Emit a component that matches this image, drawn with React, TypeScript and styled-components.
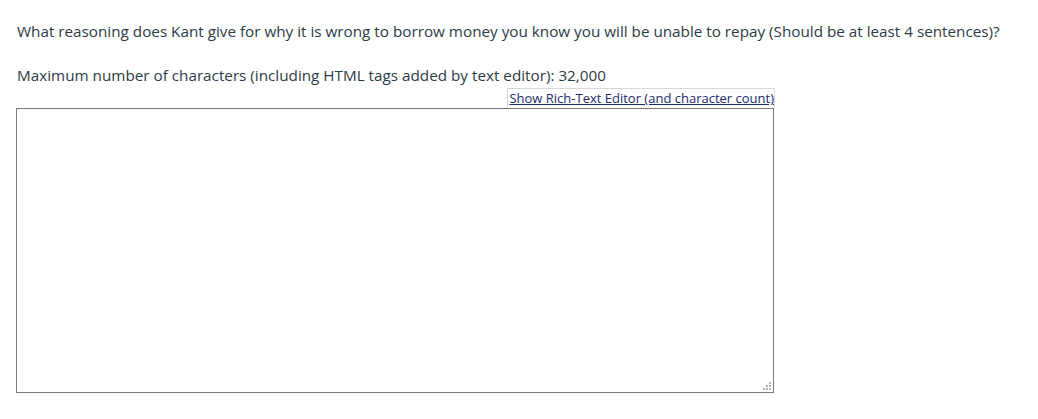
import React from 'react';
import styled, { createGlobalStyle } from 'styled-components';

const GlobalStyle = createGlobalStyle`
  body {
    margin: 0;
    background: #fff;
    font-family: "Open Sans", "Liberation Sans", sans-serif;
    color: #2d3b45;
  }
`;

const Page = styled.div`
  padding: 20px 16px 0 16px;
`;

const Question = styled.p`
  margin: 0 0 21px 1px;
  font-size: 15.25px;
  line-height: 23px;
`;

const Limit = styled.p`
  margin: 0 0 0 1px;
  font-size: 15.25px;
  line-height: 23px;
`;

const EditorWrap = styled.div`
  width: 758px;
  display: flex;
  flex-direction: column;
`;

const ToggleRow = styled.div`
  display: flex;
  justify-content: flex-end;
  margin-top: 1px;
`;

const ToggleLink = styled.a`
  font-size: 13px;
  line-height: 19px;
  color: #1c2a6a;
  text-decoration: underline;
  border: 1px solid #d8d8d8;
  border-bottom: none;
  padding: 0 0 0 1px;
  margin-right: -1px;
  cursor: pointer;
`;

const AnswerBox = styled.div`
  position: relative;
  width: 758px;
  height: 285px;
`;

const Answer = styled.textarea`
  display: block;
  box-sizing: border-box;
  width: 100%;
  height: 100%;
  margin: 0;
  border: 1px solid #7a7a7a;
  font-family: "Open Sans", "Liberation Sans", sans-serif;
  font-size: 14px;
  resize: none;
  outline: none;
`;

const Grip = styled.svg`
  position: absolute;
  right: 3px;
  bottom: 3px;
  pointer-events: none;
`;

export default function App() {
  const dots = [
    [6, 0],
    [3, 3], [6, 3],
    [0, 6], [3, 6], [6, 6],
  ];
  return (
    <Page>
      <GlobalStyle />
      <Question>
        What reasoning does Kant give for why it is wrong to borrow money you know you will be unable to repay (Should be at least 4 sentences)?
      </Question>
      <Limit>Maximum number of characters (including HTML tags added by text editor): 32,000</Limit>
      <EditorWrap>
        <ToggleRow>
          <ToggleLink>Show Rich-Text Editor (and character count)</ToggleLink>
        </ToggleRow>
        <AnswerBox>
          <Answer />
          <Grip width="8" height="8" viewBox="0 0 8 8">
            {dots.map(([x, y]) => (
              <rect key={`${x}-${y}`} x={x} y={y} width="2" height="2" fill="#b5b5b5" />
            ))}
          </Grip>
        </AnswerBox>
      </EditorWrap>
    </Page>
  );
}
